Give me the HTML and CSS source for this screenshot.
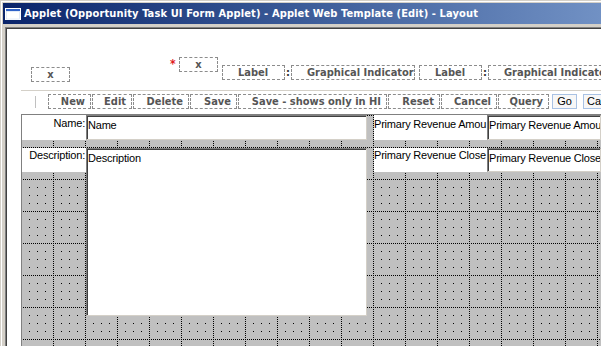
FILE: index.html
```html
<!DOCTYPE html>
<html lang="en">
<head>
  <meta charset="UTF-8" />
  <title>Layout</title>
  <link rel="stylesheet" href="styles.css">
</head>
<body>
  <div class="window">
    <div class="titlebar">
      <svg class="app-icon" viewBox="0 0 16 12" width="16" height="12">
        <rect x="0.5" y="0.5" width="15" height="11" fill="#fff" stroke="#fff"/>
        <rect x="1" y="1" width="14" height="2" fill="#2f62c8"/>
        <rect x="1.5" y="3.5" width="13" height="7.5" fill="#fff" stroke="#c8d8f0" stroke-width="0.5"/>
      </svg>
      <span class="title">Applet (Opportunity Task UI Form Applet) - Applet Web Template (Edit) - Layout</span>
    </div>

    <div class="client">
      <!-- applet header placeholders -->
      <div class="header">
        <span class="ph ph-x ph-x1">x</span>
        <span class="req">*</span>
        <span class="ph ph-x ph-x2">x</span>
        <span class="ph ph-label ph-first">Label</span>
        <span class="colon">:</span>
        <span class="ph ph-gi">Graphical Indicator</span>
        <span class="ph ph-label">Label</span>
        <span class="colon">:</span>
        <span class="ph ph-gi">Graphical Indicato</span>
      </div>

      <!-- toolbar -->
      <div class="toolbar">
        <span class="grip"></span>
        <span class="tb tb-new">New</span>
        <span class="tb tb-edit">Edit</span>
        <span class="tb tb-delete">Delete</span>
        <span class="tb tb-save">Save</span>
        <span class="tb tb-savehi">Save - shows only in HI</span>
        <span class="tb tb-reset">Reset</span>
        <span class="tb tb-cancel">Cancel</span>
        <span class="tb tb-query">Query</span>
        <span class="btn btn-go">Go</span>
        <span class="btn btn-cancel">Ca</span>
      </div>

      <!-- layout canvas -->
      <div class="canvas">
        <div class="f-label row1 col-left">Name:</div>
        <div class="f-field row1 col-mid">Name</div>
        <div class="f-label row2 col-left">Description:</div>
        <div class="f-field desc col-mid">Description</div>
        <div class="f-label row1 col-right plain">Primary Revenue Amou</div>
        <div class="f-field row1 col-far">Primary Revenue Amou</div>
        <div class="f-label row2 col-right plain">Primary Revenue Close</div>
        <div class="f-field row2 col-far">Primary Revenue Close</div>
      </div>
    </div>
  </div>
</body>
</html>
```

FILE: styles.css
```css
body {
  margin: 0;
  padding: 0;
  overflow: hidden;
  background-color: #d4d0c8;
  font-family: "DejaVu Sans Condensed", "DejaVu Sans", sans-serif;
  font-stretch: condensed;
}

.window {
  width: 601px;
  height: 346px;
  box-sizing: border-box;
  padding: 3px 0 0 3px;
  background-color: #d4d0c8;
  box-shadow: inset 1px 1px 0 #d4d0c8, inset 2px 2px 0 #fff;
  overflow: hidden;
  display: flex;
  flex-direction: column;
}

/* Title bar */
.titlebar {
  height: 21px;
  flex: none;
  display: flex;
  align-items: center;
  padding-left: 2px;
  background: linear-gradient(to right, #0a246a 0%, #3b5b98 50%, #7191c4 100%);
  color: #fff;
  font-size: 11px;
  font-weight: bold;
  letter-spacing: 0.12px;
  white-space: nowrap;
}

.app-icon {
  flex: none;
  margin-right: 3px;
}

/* Client area */
.client {
  flex: 1;
  display: flex;
  flex-direction: column;
  margin: 3px 0 0 2px;
  padding: 1px 0 0 15px;
  background-color: #fff;
  border-top: 1px solid #808080;
  border-left: 1px solid #808080;
  box-shadow: inset 1px 1px 0 #404040;
}

.header {
  height: 61px;
  flex: none;
  display: flex;
  align-items: flex-start;
  white-space: nowrap;
}

.ph {
  flex: none;
  box-sizing: border-box;
  height: 15px;
  border: 1px dashed #8c8c8c;
  color: #555;
  font-size: 11px;
  font-weight: bold;
  line-height: 13px;
  overflow: hidden;
}

.ph-x {
  width: 39px;
  text-align: center;
}

.ph-x1 {
  margin: 38px 0 0 10px;
}

.ph-x2 {
  margin-top: 28px;
}

.req {
  flex: none;
  width: 9px;
  margin: 29px 0 0 100px;
  color: #e01b1b;
  font-size: 12px;
  font-weight: bold;
  line-height: 12px;
}

.ph-label {
  width: 63px;
  margin: 36px 0 0 4px;
  padding-left: 15px;
}

.ph-gi {
  width: 124px;
  margin-top: 36px;
  padding-left: 15px;
}

.colon {
  flex: none;
  width: 6px;
  margin-top: 36px;
  color: #333;
  font-size: 11px;
  font-weight: bold;
  line-height: 15px;
  text-align: center;
}

/* Toolbar */
.toolbar {
  flex: none;
  display: flex;
  align-items: flex-start;
  padding: 3px 0 5px;
  border-top: 1px solid #d4d0c8;
  white-space: nowrap;
}

.grip {
  flex: none;
  width: 1px;
  height: 12px;
  margin: 2px 12px 0 14px;
  background-color: #c0c0c0;
}

.tb {
  flex: none;
  box-sizing: border-box;
  height: 15px;
  margin-right: 1px;
  padding-right: 5px;
  border: 1px dashed #8c8c8c;
  color: #555;
  font-size: 11px;
  font-weight: bold;
  line-height: 14px;
  text-align: right;
  overflow: hidden;
}

.tb-new { width: 43px; }
.tb-edit { width: 40px; }
.tb-delete { width: 56px; }
.tb-save { width: 47px; }
.tb-savehi { width: 149px; }
.tb-reset { width: 52px; }
.tb-cancel { width: 56px; }
.tb-query { width: 51px; margin-right: 3px; }

.btn {
  flex: none;
  box-sizing: border-box;
  height: 15px;
  border: 1px solid #a9c2e4;
  background-color: #f7f7f7;
  color: #000;
  font-family: "Liberation Sans", Arial, sans-serif;
  font-size: 11px;
  line-height: 13px;
  text-align: center;
  overflow: hidden;
}

.btn-go {
  width: 25px;
  margin-right: 6px;
}

.btn-cancel {
  width: 18px;
  padding-left: 3px;
  text-align: left;
  border-right: 0;
}

/* Layout canvas with dotted grid */
.canvas {
  flex: 1;
  position: relative;
  border-top: 1px solid #808080;
  border-left: 1px solid #808080;
  background-color: #c0c0c0;
  background-image:
    conic-gradient(at 1px 1px, transparent 75%, #000 0),
    conic-gradient(at 1px 1px, transparent 75%, #000 0),
    conic-gradient(at 1px 1px, transparent 75%, #000 0);
  background-size: 2px 32px, 32px 2px, 8px 8px;
  background-position: 0 1px, 0 1px, 0 1px;
  background-origin: border-box;
  font-family: "Liberation Sans", Arial, sans-serif;
  font-size: 11px;
  letter-spacing: -0.2px;
  line-height: 13px;
  color: #000;
}

.f-label,
.f-field {
  position: absolute;
  box-sizing: border-box;
  background-color: #fff;
  white-space: nowrap;
  overflow: hidden;
}

.f-label {
  padding: 2px 1px 0 0;
  text-align: right;
}

.f-label.plain {
  padding: 3px 0 0;
  text-align: left;
}

.f-field {
  padding: 3px 1px 0;
  border-style: solid;
  border-width: 1px;
  border-color: #808080 #d4d0c8 #d4d0c8 #808080;
  box-shadow: inset 1px 1px 0 #404040;
}

.row1 { top: 0; height: 25px; }
.row2 { top: 33px; height: 24px; }
.row2.f-label { padding-top: 1px; }

.desc {
  top: 33px;
  height: 168px;
}

.col-left { left: 0; width: 64px; }
.col-mid { left: 64px; width: 281px; }
.col-right { left: 352px; width: 113px; }
.col-far { left: 465px; width: 114px; }
```
